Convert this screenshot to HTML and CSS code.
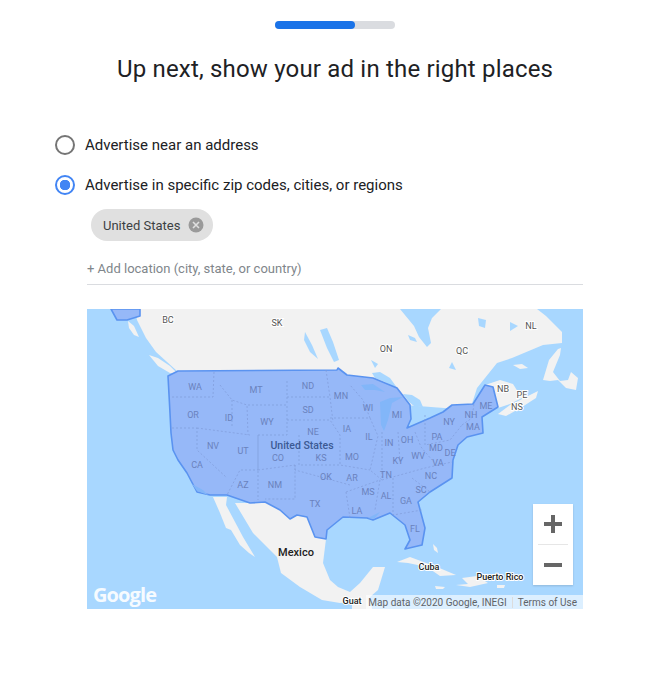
FILE: index.html
```html
<!DOCTYPE html>
<html lang="en">
<head>
  <meta charset="UTF-8" />
  <title>Ad location</title>
  <link rel="stylesheet" href="styles.css">
</head>
<body>
  <div class="progress"><div class="progress-fill"></div></div>

  <h1 class="title">Up next, show your ad in the right places</h1>

  <div class="options">
    <label class="option">
      <span class="radio"></span>
      Advertise near an address
    </label>
    <label class="option">
      <span class="radio radio-on"></span>
      Advertise in specific zip codes, cities, or regions
    </label>
  </div>

  <div class="location">
    <div class="chip">
      <span>United States</span>
      <svg class="chip-x" width="16" height="16" viewBox="0 0 16 16">
        <circle cx="8" cy="8" r="7.5" fill="#9a9a9a" />
        <path d="M5 5l6 6M11 5l-6 6" stroke="#e0e0e0" stroke-width="1.6" />
      </svg>
    </div>
    <div class="add-location">+ Add location (city, state, or country)</div>

    <div class="map">
      <svg class="map-svg" width="496" height="300" viewBox="87 309 496 300">
        <rect x="87" y="309" width="496" height="300" fill="#a8d7ff" />

        <!-- canada -->
        <path class="land" d="M135 309L137 320L146 338L156 352L177 371L168 380L340 400L470 410L477 388L485 378L497 363L512 358L543 345L562 343L562 332L546 316L537 309Z" />
        <path class="land" d="M128 321L134 326L139 337L134 335L129 328Z" />
        <path class="land" d="M149 355L158 358L170 366L178 374L170 373L158 366Z" />
        <path class="land" d="M513 365L522 364L528 368L520 369Z" />
        <path class="land" d="M498 414L510 405L528 396L538 391L536 398L522 407L506 416Z" />
        <path class="land" d="M553 372L560 355L561 348L558 349L549 360L543 380L550 381L558 380L566 388L576 390L578 378L571 372L568 380L560 381Z" />
        <path class="land" d="M485 385L500 380L513 384L518 392L526 396L510 404L498 408L492 398Z" />

        <!-- canadian water -->
        <path class="water" d="M400 309L441 309L432 318L428 328L431 343L427 347L419 337L414 326Z" />
        <path class="water" d="M408 335L415 338L417 342L410 340Z" />
        <path class="water" d="M320 330L327 348L334 362L339 360L333 342L327 328Z" />
        <path class="water" d="M305 332L312 345L318 359L310 352L304 340Z" />
        <path class="water" d="M478 318L486 320L485 328L479 326Z" />
        <path class="water" d="M510 322L518 326L510 331Z" />
        <path class="water" d="M371 360L378 364L375 368Z" />
        <path class="water" d="M452 362L456 370L449 368Z" />
        <path class="water" d="M372 373L380 372L390 378L398 389L385 382L375 378Z" />
        <path class="water" d="M403 394L412 395L420 400L423 407L414 406L409 402Z" />

        <!-- mexico and islands -->
        <path class="land" d="M235 503L253 533L277 557L281 573L300 587L322 600L340 603L352 602L352 609L372 609L370 597L378 590L385 567L373 567L360 583L350 592L338 587L330 580L323 563L326 539L315 537L307 517L297 515L290 519L280 510L265 502L250 503Z" />
        <path class="land" d="M213 497L227 497L226 505L243 537L255 557L249 553L240 545L231 530L226 528L220 513Z" />
        <path class="land" d="M397 562L410 557L437 567L456 575L440 576L427 567L408 563Z" />
        <path class="land" d="M462 578L477 576L488 583L470 587L456 585L468 584Z" />
        <path class="land" d="M497 585L505 585L504 588L497 588Z" />
        <path class="land" d="M435 586L445 587L443 589L436 589Z" />
        <path class="land" d="M433 544L437 548L438 553L434 550Z" />

        <!-- united states -->
        <path class="state" d="M168 376L178 371L337 370L338 368L347 375L373 378L397 388L410 405L411 419L407 428L430 418L443 412L452 405L473 404L485 385L493 387L498 407L482 417L483 433L467 437L458 445L453 460L452 478L430 492L418 502L425 528L422 545L405 549L410 540L405 525L390 513L373 520L367 518L343 517L327 530L326 539L315 537L307 517L297 515L290 519L280 510L265 502L250 503L227 495L210 495L197 492L187 473L178 460L173 450L171 433L170 413Z" />
        <path class="state" d="M111 309L140 309L140 316L127 320L117 320Z" />
        <path class="lake" d="M361 385L373 384L385 392L375 390L365 390Z" />
        <path class="lake" d="M380 402L390 398L403 397L392 403L388 420L384 431L381 425Z" />
        <path class="lake" d="M192 484L203 490L208 495L197 491Z" />
        <path class="lake" d="M368 518L380 512L374 519Z" />

        <!-- state borders -->
        <g class="borders">
          <path d="M214 372L213 397L172 397M220 385L232 400L247 405L248 435M248 405L287 405L287 435L258 435L258 470L240 470L227 495" />
          <path d="M287 381L287 405M287 397L330 397L333 422M287 420L330 420L340 435L340 465L370 470" />
          <path d="M172 428L197 428L197 450L227 478M197 428L250 435M232 400L232 428M258 435L258 500" />
          <path d="M258 470L295 465L295 499L265 499M299 435L299 465L340 465M295 465L295 470L350 485" />
          <path d="M326 370L330 397M330 418L370 418L378 436L370 470L382 480M370 418L363 400L350 385" />
          <path d="M382 432L382 480L425 468L452 462M398 432L400 462M415 432L421 447L432 460M425 415L425 445L450 440L462 425" />
          <path d="M346 492L380 480L375 510M393 478L393 515L422 510M412 478L430 492M346 492L350 518M462 425L472 418L474 404" />
        </g>

        <!-- labels -->
        <g class="label-state">
          <text x="195" y="390">WA</text><text x="256" y="393">MT</text><text x="308" y="389">ND</text><text x="341" y="399">MN</text>
          <text x="368" y="411">WI</text><text x="397" y="418">MI</text><text x="449" y="425">NY</text><text x="486" y="409">ME</text>
          <text x="471" y="418">NH</text><text x="473" y="430">MA</text><text x="193" y="418">OR</text><text x="229" y="421">ID</text>
          <text x="267" y="425">WY</text><text x="308" y="413">SD</text><text x="313" y="435">NE</text><text x="347" y="432">IA</text>
          <text x="369" y="440">IL</text><text x="389" y="446">IN</text><text x="407" y="443">OH</text><text x="437" y="440">PA</text>
          <text x="436" y="451">MD</text><text x="450" y="456">DE</text><text x="213" y="449">NV</text><text x="243" y="454">UT</text>
          <text x="278" y="461">CO</text><text x="321" y="461">KS</text><text x="352" y="460">MO</text><text x="398" y="464">KY</text>
          <text x="418" y="459">WV</text><text x="438" y="466">VA</text><text x="197" y="468">CA</text><text x="243" y="488">AZ</text>
          <text x="275" y="488">NM</text><text x="326" y="480">OK</text><text x="352" y="481">AR</text><text x="386" y="478">TN</text>
          <text x="431" y="479">NC</text><text x="315" y="507">TX</text><text x="368" y="495">MS</text><text x="386" y="499">AL</text>
          <text x="406" y="504">GA</text><text x="421" y="493">SC</text><text x="357" y="514">LA</text><text x="415" y="532">FL</text>
        </g>
        <text class="label-country" x="302" y="449">United States</text>
        <g class="label-region">
          <text x="168" y="323">BC</text><text x="277" y="326">SK</text><text x="386" y="352">ON</text><text x="462" y="354">QC</text>
          <text x="531" y="329">NL</text><text x="503" y="392">NB</text><text x="522" y="398">PE</text><text x="517" y="410">NS</text>
        </g>
        <text class="label-mexico" x="296" y="556">Mexico</text>
        <text class="label-place" x="429" y="570">Cuba</text>
        <text class="label-place" x="500" y="580">Puerto Rico</text>
        <text class="label-place" x="352" y="604">Guat</text>
        <text class="google" x="93" y="602">Google</text>
      </svg>

      <div class="zoom-box">
        <button class="zoom-btn">
          <svg width="18" height="18" viewBox="0 0 18 18"><path d="M9 0v18M0 9h18" stroke="#666" stroke-width="4" /></svg>
        </button>
        <div class="zoom-line"></div>
        <button class="zoom-btn">
          <svg width="18" height="18" viewBox="0 0 18 18"><path d="M0 9h18" stroke="#666" stroke-width="4" /></svg>
        </button>
      </div>

      <div class="attribution">
        <span>Map data ©2020 Google, INEGI</span>
        <span class="terms">Terms of Use</span>
      </div>
    </div>
  </div>
</body>
</html>
```

FILE: styles.css
```css
body {
  margin: 0;
  background: #fff;
  color: #202124;
  font-family: Roboto, "Liberation Sans", sans-serif;
}
.progress {
  width: 120px;
  height: 8px;
  margin: 21px 0 0 275px;
  background: #dadce0;
  border-radius: 4px;
}
.progress-fill {
  width: 80px;
  height: 8px;
  background: #1a73e8;
  border-radius: 4px;
}
.title {
  margin: 24px 0 0 117px;
  font-size: 24px;
  line-height: 32px;
  font-weight: 400;
  letter-spacing: 0.18px;
  white-space: nowrap;
}
.options {
  margin: 50px 0 0 55px;
  display: flex;
  flex-direction: column;
  gap: 20px;
}
.option {
  display: flex;
  align-items: center;
  gap: 10px;
  height: 20px;
  font-size: 15px;
}
.radio {
  width: 20px;
  height: 20px;
  box-sizing: border-box;
  border: 2px solid #757575;
  border-radius: 50%;
}
.radio-on {
  border-color: #4285f4;
  background: radial-gradient(circle, #4285f4 0 5px, #fff 5.5px);
}
.location {
  margin: 14px 0 0 87px;
  width: 496px;
}
.chip {
  margin-left: 4px;
  width: 122px;
  height: 32px;
  box-sizing: border-box;
  padding: 0 9px 0 12px;
  display: flex;
  align-items: center;
  justify-content: space-between;
  background: #e0e0e0;
  border-radius: 16px;
  font-size: 13px;
  color: #3c4043;
}
.chip-x {
  display: block;
}
.add-location {
  margin-top: 18px;
  padding-bottom: 6px;
  height: 19px;
  border-bottom: 1px solid #dadce0;
  font-size: 13px;
  line-height: 19px;
  color: #80868b;
}
.map {
  position: relative;
  margin-top: 24px;
  width: 496px;
  height: 300px;
  overflow: hidden;
}
.map-svg {
  display: block;
}
.land {
  fill: #f2f2f2;
}
.water {
  fill: #a8d7ff;
}
.state {
  fill: #96b8f8;
  stroke: #5a93f0;
  stroke-width: 1.6;
  stroke-linejoin: round;
}
.lake {
  fill: #82b6f9;
}
.borders path {
  fill: none;
  stroke: #7f9bd8;
  stroke-width: 0.7;
  stroke-dasharray: 2 2;
}
.map-svg text {
  text-anchor: middle;
  font-family: Roboto, "Liberation Sans", sans-serif;
}
.label-state text {
  font-size: 9px;
  fill: #6a82bd;
}
.map-svg .label-country {
  font-size: 10.5px;
  font-weight: 500;
  fill: #3c5a94;
}
.label-region text {
  font-size: 9px;
  fill: #555;
  paint-order: stroke;
  stroke: #fff;
  stroke-width: 2px;
}
.map-svg .label-mexico {
  font-size: 11px;
  font-weight: 500;
  fill: #222;
}
.map-svg .label-place {
  font-size: 9px;
  font-weight: 500;
  fill: #222;
  paint-order: stroke;
  stroke: #fff;
  stroke-width: 2px;
}
.map-svg .google {
  text-anchor: start;
  font-family: "Open Sans", sans-serif;
  font-size: 20px;
  font-weight: 700;
  letter-spacing: -0.9px;
  fill: #fff;
  opacity: 0.9;
}
.zoom-box {
  position: absolute;
  left: 446px;
  top: 195px;
  width: 40px;
  height: 81px;
  background: #fff;
  box-shadow: 0 1px 2px rgba(0, 0, 0, 0.15);
  display: flex;
  flex-direction: column;
  align-items: center;
}
.zoom-btn {
  width: 40px;
  height: 40px;
  padding: 0;
  border: none;
  background: none;
  display: flex;
  align-items: center;
  justify-content: center;
}
.zoom-line {
  width: 30px;
  height: 1px;
  background: #e6e6e6;
}
.attribution {
  position: absolute;
  right: 0;
  bottom: 0;
  height: 14px;
  padding: 0 6px 0 2px;
  display: flex;
  align-items: center;
  gap: 5px;
  background: rgba(255, 255, 255, 0.6);
  font-size: 10px;
  color: #5f6368;
}
.terms {
  padding-left: 5px;
  border-left: 1px solid #dcdcdc;
}
```
